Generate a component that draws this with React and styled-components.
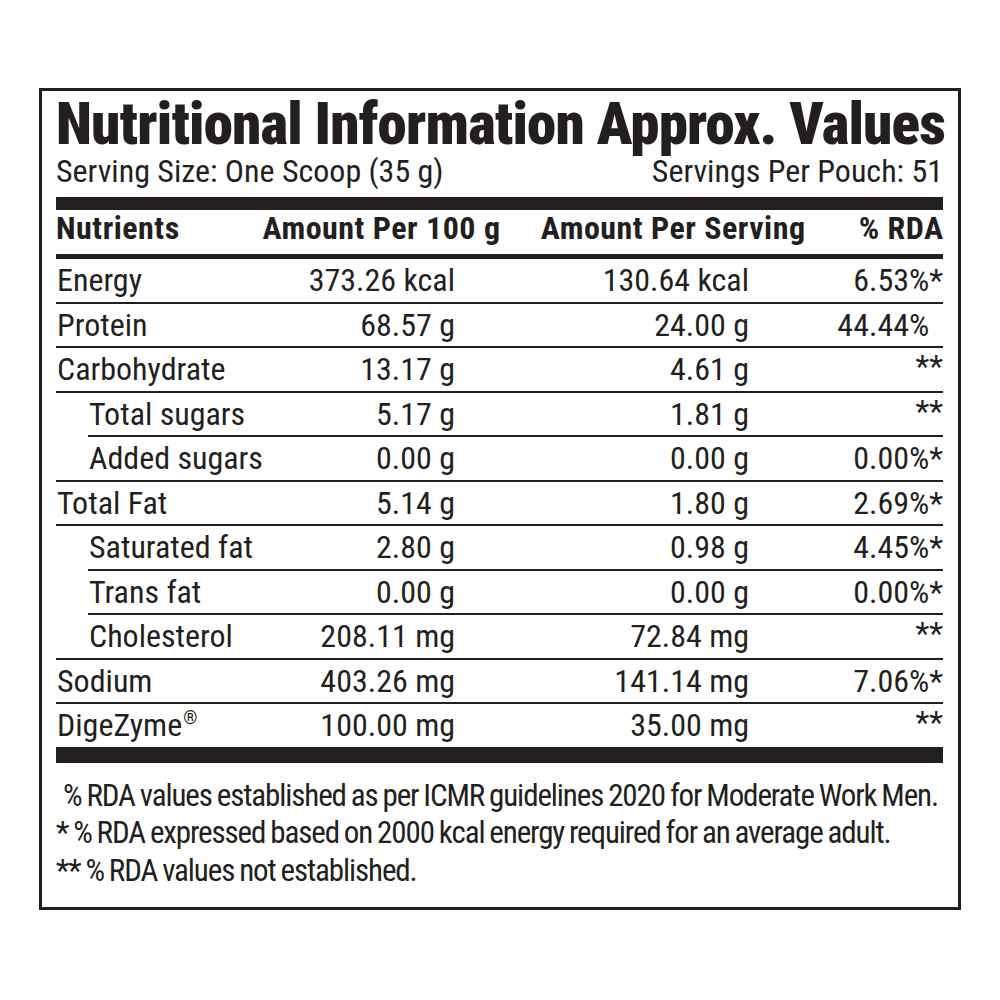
import React from "react";
import styled, { createGlobalStyle } from "styled-components";

const INK = "#231f20";

const GlobalStyle = createGlobalStyle`
  html, body { margin: 0; padding: 0; background: #ffffff; }
  body {
    font-family: Roboto, "Liberation Sans", Arial, sans-serif;
    color: ${INK};
    -webkit-font-smoothing: antialiased;
  }
`;

const Page = styled.div`
  width: 1000px;
  height: 1000px;
  padding: 88px 0 0 39px;
  box-sizing: border-box;
`;

const Label = styled.section`
  width: 922px;
  height: 822px;
  box-sizing: border-box;
  border: 3px solid ${INK};
  padding: 2px 15px 0 14px;
  display: flex;
  flex-direction: column;
  font-stretch: 75%;
`;

const Title = styled.h1`
  margin: 0;
  font-size: 59px;
  line-height: 62px;
  font-weight: 900;
  letter-spacing: -0.8px;
  white-space: nowrap;
`;

const ServingLine = styled.div`
  display: flex;
  justify-content: space-between;
  font-size: 32px;
  line-height: 32px;
  font-weight: 400;
  white-space: nowrap;
`;

const Bar = styled.div`
  height: ${(p) => p.$h}px;
  margin-top: ${(p) => p.$mt || 0}px;
  background: ${INK};
  flex: none;
`;

const HeaderRow = styled.div`
  display: grid;
  grid-template-columns: 200px 244px 305px 138px;
  padding: 3px 0 10px;
  font-size: 32px;
  line-height: 31px;
  font-weight: 700;
  letter-spacing: 0.5px;
  white-space: nowrap;
`;

const HeadCell = styled.div`
  text-align: ${(p) => (p.$left ? "left" : "right")};
  margin-right: ${(p) => (p.$left ? 0 : -0.5)}px;
`;

const Row = styled.div`
  display: grid;
  grid-template-columns: 200px 199px 294px 194px;
  align-items: center;
  height: 42.5px;
  font-size: 32px;
  line-height: 32px;
  white-space: nowrap;
`;

const Name = styled.div`
  padding-left: ${(p) => (p.$sub ? 33 : 1)}px;
`;

const Value = styled.div`
  text-align: right;
`;

const Rda = styled.div`
  text-align: right;
  align-self: ${(p) => (p.$stars ? "start" : "center")};
  padding-top: ${(p) => (p.$stars ? 2 : 0)}px;
`;

const Ghost = styled.span`
  visibility: hidden;
`;

const Reg = styled.sup`
  font-size: 18px;
  line-height: 0;
  vertical-align: 12px;
  margin-left: 1px;
`;

const Divider = styled.div`
  height: 2px;
  background: ${INK};
  margin-left: ${(p) => (p.$sub ? 32 : 0)}px;
`;

const Notes = styled.div`
  padding-top: 14px;
  font-size: 31px;
  line-height: 37.5px;
  letter-spacing: -1.1px;
  word-spacing: -1.1px;
  white-space: nowrap;
`;

const Note = styled.p`
  margin: 0;
  padding-left: ${(p) => p.$indent || 0}px;
`;

const rows = [
  { name: "Energy", a: "373.26 kcal", b: "130.64 kcal", rda: "6.53%*" },
  { name: "Protein", a: "68.57 g", b: "24.00 g", rda: "44.44%", ghost: true },
  { name: "Carbohydrate", a: "13.17 g", b: "4.61 g", rda: "**" },
  { name: "Total sugars", sub: true, a: "5.17 g", b: "1.81 g", rda: "**", subLine: true },
  { name: "Added sugars", sub: true, a: "0.00 g", b: "0.00 g", rda: "0.00%*" },
  { name: "Total Fat", a: "5.14 g", b: "1.80 g", rda: "2.69%*" },
  { name: "Saturated fat", sub: true, a: "2.80 g", b: "0.98 g", rda: "4.45%*", subLine: true },
  { name: "Trans fat", sub: true, a: "0.00 g", b: "0.00 g", rda: "0.00%*", subLine: true },
  { name: "Cholesterol", sub: true, a: "208.11 mg", b: "72.84 mg", rda: "**" },
  { name: "Sodium", a: "403.26 mg", b: "141.14 mg", rda: "7.06%*" },
  { name: "DigeZyme", reg: true, a: "100.00 mg", b: "35.00 mg", rda: "**" },
];

export default function App() {
  return (
    <Page>
      <GlobalStyle />
      <Label>
        <Title>Nutritional Information Approx. Values</Title>
        <ServingLine>
          <span>Serving Size: One Scoop (35 g)</span>
          <span>Servings Per Pouch: 51</span>
        </ServingLine>
        <Bar $h={13} $mt={10} />
        <HeaderRow>
          <HeadCell $left>Nutrients</HeadCell>
          <HeadCell>Amount Per 100 g</HeadCell>
          <HeadCell>Amount Per Serving</HeadCell>
          <HeadCell>% RDA</HeadCell>
        </HeaderRow>
        <Bar $h={5} />
        {rows.map((r, i) => (
          <React.Fragment key={r.name}>
            <Row>
              <Name $sub={r.sub}>
                {r.name}
                {r.reg && <Reg>®</Reg>}
              </Name>
              <Value>{r.a}</Value>
              <Value>{r.b}</Value>
              <Rda $stars={r.rda === "**"}>
                {r.rda}
                {r.ghost && <Ghost>*</Ghost>}
              </Rda>
            </Row>
            {i < rows.length - 1 && <Divider $sub={r.subLine} />}
          </React.Fragment>
        ))}
        <Bar $h={16} />
        <Notes>
          <Note $indent={7}>% RDA values established as per ICMR guidelines 2020 for Moderate Work Men.</Note>
          <Note>* % RDA expressed based on 2000 kcal energy required for an average adult.</Note>
          <Note>** % RDA values not established.</Note>
        </Notes>
      </Label>
    </Page>
  );
}
